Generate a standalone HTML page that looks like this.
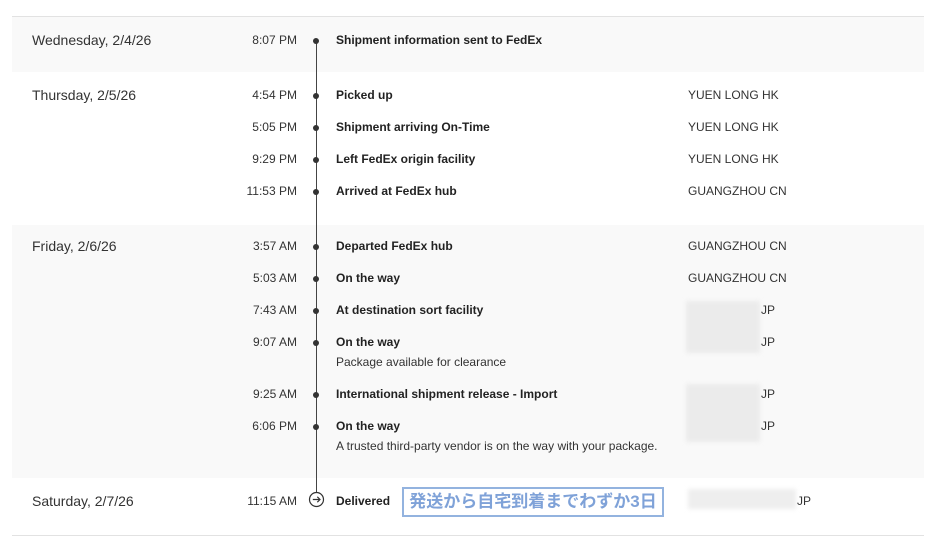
<!DOCTYPE html>
<html><head><meta charset="utf-8"><style>
body{margin:0;width:940px;height:548px;background:#fff;font-family:"Liberation Sans",sans-serif;color:#333;position:relative;overflow:hidden}
.a{position:absolute;white-space:nowrap}
.band{position:absolute;left:12px;width:912px;background:#f9f9f9}
.d{font-size:14px;left:32px;color:#333}
.t{font-size:12px;right:643px;color:#333}
.e{font-size:12px;left:336px;font-weight:bold;color:#222}
.s{font-size:12px;left:336px;color:#333}
.l{font-size:12px;left:688px;color:#333}
.dot{position:absolute;left:313px;width:6px;height:6px;border-radius:50%;background:#333}
.blur{position:absolute;background:#ebebeb;filter:blur(2px)}
</style></head><body>
<div class="a" style="left:12px;top:16px;width:912px;height:1px;background:#e2e2e2"></div>
<div class="band" style="top:17px;height:55px"></div>
<div class="band" style="top:225px;height:253px"></div>
<div class="a" style="left:12px;top:535px;width:912px;height:1px;background:#e2e2e2"></div>
<div class="a" style="left:315.5px;top:40px;width:1.5px;height:452px;background:#444"></div>

<div class="a d" style="top:32px">Wednesday, 2/4/26</div>
<div class="a d" style="top:87px">Thursday, 2/5/26</div>
<div class="a d" style="top:238px">Friday, 2/6/26</div>
<div class="a d" style="top:493px">Saturday, 2/7/26</div>

<div class="a t" style="top:33px">8:07 PM</div><div class="dot" style="top:38px"></div><div class="a e" style="top:33px">Shipment information sent to FedEx</div>
<div class="a t" style="top:88px">4:54 PM</div><div class="dot" style="top:93px"></div><div class="a e" style="top:88px">Picked up</div><div class="a l" style="top:88px">YUEN LONG HK</div>
<div class="a t" style="top:120px">5:05 PM</div><div class="dot" style="top:125px"></div><div class="a e" style="top:120px">Shipment arriving On-Time</div><div class="a l" style="top:120px">YUEN LONG HK</div>
<div class="a t" style="top:152px">9:29 PM</div><div class="dot" style="top:157px"></div><div class="a e" style="top:152px">Left FedEx origin facility</div><div class="a l" style="top:152px">YUEN LONG HK</div>
<div class="a t" style="top:184px">11:53 PM</div><div class="dot" style="top:189px"></div><div class="a e" style="top:184px">Arrived at FedEx hub</div><div class="a l" style="top:184px">GUANGZHOU CN</div>
<div class="a t" style="top:239px">3:57 AM</div><div class="dot" style="top:244px"></div><div class="a e" style="top:239px">Departed FedEx hub</div><div class="a l" style="top:239px">GUANGZHOU CN</div>
<div class="a t" style="top:271px">5:03 AM</div><div class="dot" style="top:276px"></div><div class="a e" style="top:271px">On the way</div><div class="a l" style="top:271px">GUANGZHOU CN</div>
<div class="a t" style="top:303px">7:43 AM</div><div class="dot" style="top:308px"></div><div class="a e" style="top:303px">At destination sort facility</div>
<div class="a t" style="top:335px">9:07 AM</div><div class="dot" style="top:340px"></div><div class="a e" style="top:335px">On the way</div><div class="a s" style="top:355px">Package available for clearance</div>
<div class="a t" style="top:387px">9:25 AM</div><div class="dot" style="top:392px"></div><div class="a e" style="top:387px">International shipment release - Import</div>
<div class="a t" style="top:419px">6:06 PM</div><div class="dot" style="top:424px"></div><div class="a e" style="top:419px">On the way</div><div class="a s" style="top:439px">A trusted third-party vendor is on the way with your package.</div>

<div class="blur" style="left:686px;top:301px;width:74px;height:52px"></div>
<div class="blur" style="left:686px;top:384px;width:74px;height:58px"></div>
<div class="a l" style="left:761px;top:303px">JP</div>
<div class="a l" style="left:761px;top:335px">JP</div>
<div class="a l" style="left:761px;top:387px">JP</div>
<div class="a l" style="left:761px;top:419px">JP</div>

<div class="a t" style="top:494px">11:15 AM</div>
<svg class="a" style="left:308px;top:491px" width="17" height="17" viewBox="0 0 17 17"><circle cx="8.5" cy="8.5" r="7" fill="#fff" stroke="#333" stroke-width="1.2"/><path d="M4.8 8.5H12M9.3 5.8L12 8.5 9.3 11.2" fill="none" stroke="#333" stroke-width="1.2"/></svg>
<div class="a e" style="top:494px">Delivered</div>
<div class="a" style="left:402px;top:487px;width:258px;height:26px;border:2px solid #93b3df;color:#7fa2d8;font-family:'Liberation Sans','Noto Sans CJK JP',sans-serif;font-size:17px;font-weight:bold;line-height:26px;text-align:center">発送から自宅到着までわずか3日</div>
<div class="blur" style="left:688px;top:489px;width:108px;height:20px;background:#eeeeee"></div>
<div class="a l" style="left:797px;top:494px">JP</div>
</body></html>
